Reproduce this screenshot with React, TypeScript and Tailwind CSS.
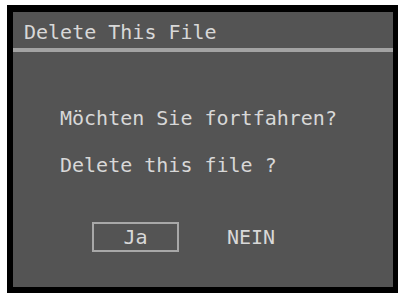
import React from 'react';

export default function App() {
  return (
    <div className="w-[401px] h-[293px] bg-white overflow-hidden">
      <div className="ml-[7px] mt-[5px] w-[391px] h-[288px] bg-[#545454] border-black border-t-[7px] border-l-[6px] border-r-[5px] border-b-[6px] text-[#d8d8d8] text-[20px] leading-[24px] font-['DejaVu_Sans_Mono',monospace]">
        <div className="h-[36px] flex items-center pl-[11px] pt-[4px]">Delete This File</div>
        <div className="h-[4px] bg-[#a3a3a3]" />
        <div className="pl-[47px] pt-[54px]">
          <p>Möchten Sie fortfahren?</p>
          <p className="mt-[23px]">Delete this file ?</p>
        </div>
        <div className="flex items-center mt-[45px] pl-[79px] gap-[48px]">
          <div className="w-[87px] h-[30px] border-2 border-[#a8a8a8] flex items-center justify-center">Ja</div>
          <span>NEIN</span>
        </div>
      </div>
    </div>
  );
}
